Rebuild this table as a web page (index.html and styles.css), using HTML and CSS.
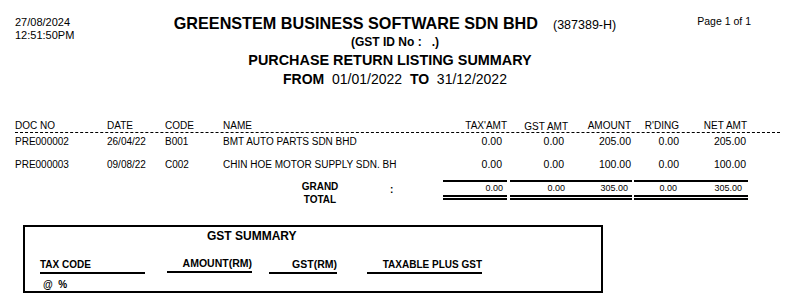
FILE: index.html
```html
<!DOCTYPE html>
<html>
<head>
<meta charset="utf-8">
<link rel="stylesheet" href="styles.css">
</head>
<body>
<div class="page">
  <header class="hdr">
    <div class="stamp">
      <div>27/08/2024</div>
      <div>12:51:50PM</div>
    </div>
    <div class="titles">
      <div class="co"><span class="coname">GREENSTEM BUSINESS SOFTWARE SDN BHD</span><span class="reg">(387389-H)</span></div>
      <div class="gstid">(GST ID No :&nbsp;&nbsp; .)</div>
      <div class="rpt">PURCHASE RETURN LISTING SUMMARY</div>
      <div class="range"><b>FROM</b>&nbsp; 01/01/2022&nbsp; <b>TO</b>&nbsp; 31/12/2022</div>
    </div>
    <div class="pg">Page 1 of 1</div>
  </header>

  <div class="row head">
    <div>DOC NO</div>
    <div>DATE</div>
    <div>CODE</div>
    <div>NAME</div>
    <div class="num">TAX'AMT</div>
    <div class="num gsth">GST AMT</div>
    <div class="num">AMOUNT</div>
    <div class="num">R'DING</div>
    <div class="num">NET AMT</div>
    <div></div>
  </div>

  <div class="row item">
    <div>PRE000002</div>
    <div>26/04/22</div>
    <div>B001</div>
    <div>BMT AUTO PARTS SDN BHD</div>
    <div class="num v tax">0.00</div>
    <div class="num v gst">0.00</div>
    <div class="num v">205.00</div>
    <div class="num v">0.00</div>
    <div class="num v net">205.00</div>
    <div></div>
  </div>

  <div class="row item">
    <div>PRE000003</div>
    <div>09/08/22</div>
    <div>C002</div>
    <div>CHIN HOE MOTOR SUPPLY SDN. BH</div>
    <div class="num v tax">0.00</div>
    <div class="num v gst">0.00</div>
    <div class="num v">100.00</div>
    <div class="num v">0.00</div>
    <div class="num v net">100.00</div>
    <div></div>
  </div>

  <div class="totals">
    <div class="gt-label">GRAND<br>TOTAL</div>
    <div class="gt-colon">:</div>
    <div class="grp g1"><span class="c1">0.00</span></div>
    <div class="grp g2"><span class="c1">0.00</span><span class="c2">305.00</span></div>
    <div class="grp g3"><span class="c1">0.00</span><span class="c2">305.00</span></div>
  </div>

  <section class="gstbox">
    <div class="gst-title">GST SUMMARY</div>
    <div class="gst-cols">
      <div class="gc code">TAX CODE</div>
      <div class="gc amt">AMOUNT(RM)</div>
      <div class="gc gst">GST(RM)</div>
      <div class="gc tpg">TAXABLE PLUS GST</div>
    </div>
    <div class="gst-row">@&nbsp; %</div>
  </section>
</div>
</body>
</html>
```

FILE: styles.css
```css
* { box-sizing: border-box; }
html, body { margin: 0; padding: 0; background: #fff; }
body {
  font-family: "Liberation Sans", Arial, sans-serif;
  color: #000;
  width: 790px;
  height: 302px;
  overflow: hidden;
}
.page { padding-top: 14px; }

/* header */
.hdr {
  display: grid;
  grid-template-columns: 1fr auto 1fr;
  align-items: start;
}
.stamp {
  padding-left: 15px;
  padding-top: 2px;
  font-size: 11px;
  line-height: 13px;
}
.titles { text-align: center; }
.co {
  display: flex;
  align-items: baseline;
  gap: 15px;
  line-height: 18px;
}
.coname { font-size: 16.2px; font-weight: bold; }
.reg { font-size: 12.5px; }
.gstid { font-size: 12px; font-weight: bold; line-height: 16px; }
.rpt { font-size: 14.4px; font-weight: bold; line-height: 20px; padding-right: 10px; }
.range { font-size: 14px; line-height: 19px; }
.range b { font-size: 14px; }
.pg {
  text-align: right;
  padding-right: 39px;
  padding-top: 1px;
  font-size: 10.5px;
  line-height: 13px;
}

/* listing */
.row {
  display: grid;
  grid-template-columns: 92px 58px 58px 224px 60px 59px 65px 48px 68px 33px;
  margin-left: 15px;
  width: 765px;
  font-size: 10px;
  line-height: 13px;
  white-space: nowrap;
}
.head {
  margin-top: 30px;
  border-bottom: 1px dashed #000;
  align-items: start;
}
.head .gsth { margin-right: -2px; padding-top: 2px; line-height: 11px; }
.item { padding: 2px 0 8px; }
.num { text-align: right; }
.v { font-size: 10.5px; }
.v.tax { padding-right: 5px; }
.v.gst { padding-right: 2px; }
.v.net { padding-right: 1px; }

/* totals */
.totals {
  display: grid;
  grid-template-columns: 275px 60px 40px 53px 64px 3px 122px 2px 114px;
  margin-left: 15px;
  margin-top: 1px;
  align-items: start;
}
.gt-label {
  grid-column: 2;
  text-align: center;
  font-weight: bold;
  font-size: 10px;
  line-height: 13px;
}
.gt-colon {
  grid-column: 4;
  padding-top: 3px;
  font-weight: bold;
  font-size: 10px;
  line-height: 13px;
}
.grp {
  display: flex;
  border-top: 2px solid #000;
  border-bottom: 5px double #000;
  font-size: 9px;
  line-height: 13px;
}
.grp span { display: block; text-align: right; }
.g1 { grid-column: 5; justify-content: flex-end; padding-right: 4px; }
.g2 { grid-column: 7; }
.g2 .c1 { width: 55px; }
.g2 .c2 { flex: 1; padding-right: 4px; }
.g3 { grid-column: 9; }
.g3 .c1 { width: 43px; }
.g3 .c2 { flex: 1; padding-right: 6px; }

/* gst summary box */
.gstbox {
  margin: 19px 0 0 23px;
  width: 580px;
  height: 68px;
  border: 2px solid #000;
  font-weight: bold;
  font-size: 10px;
}
.gst-title {
  padding-left: 182px;
  padding-top: 2px;
  font-size: 12px;
  line-height: 14px;
}
.gst-cols {
  display: flex;
  align-items: end;
  margin-top: 14px;
  padding-left: 15px;
}
.gc {
  line-height: 13px;
  padding-bottom: 1px;
  border-bottom: 2px solid #000;
  text-align: right;
  font-size: 10px;
}
.gc.code { width: 105px; text-align: left; }
.gc.amt { width: 85px; margin-left: 22px; margin-bottom: 1px; font-size: 10.5px; }
.gc.gst { width: 68px; margin-left: 17px; font-size: 10.5px; }
.gc.tpg { width: 115px; margin-left: 30px; }
.gst-row {
  margin-top: 4px;
  padding-left: 18px;
  line-height: 13px;
}
```
